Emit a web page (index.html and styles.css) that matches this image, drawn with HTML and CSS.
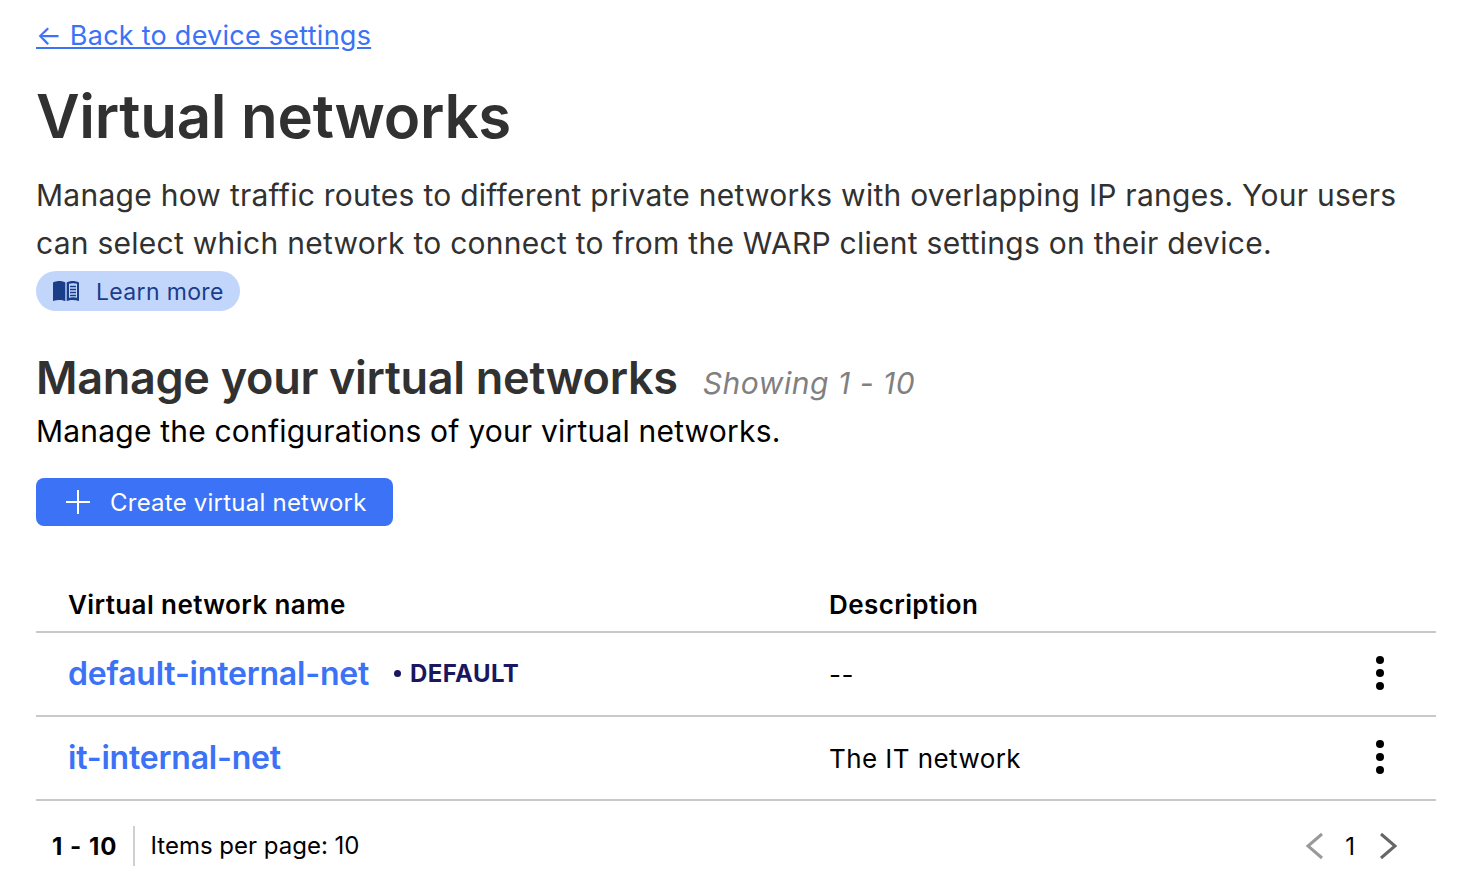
FILE: index.html

```html
<!DOCTYPE html>
<html lang="en">
<head>
  <meta charset="UTF-8" />
  <title>Virtual networks</title>
  <link rel="stylesheet" href="styles.css">
</head>
<body>
  <div class="page">
    <a class="back-link" href="#">← Back to device settings</a>
    <h1>Virtual networks</h1>
    <p class="intro">Manage how traffic routes to different private networks with overlapping IP ranges. Your users can select which network to connect to from the WARP client settings on their device.</p>
    <a class="learn-more" href="#">
      <svg class="book-icon" width="28" height="22" viewBox="0 0 28 22" aria-hidden="true">
        <path d="M1 2.500 C5 .5 10 .5 13.300 2.500 V21 C10 19.500 5 19.500 1 21 Z" fill="#1a3d8a"/>
        <path d="M14.700 2.500 C18 .5 23 .5 27 2.500 V21 C23 19.500 18 19.500 14.700 21 Z M17 3.800 V17.800 C19.500 17 22.500 17 25 17.800 V3.800 C22.500 3 19.500 3 17 3.800 Z" fill="#1a3d8a"/>
        <path d="M18 6.500 H24 M18 9.500 H24 M18 12.500 H24 M18 15.500 H24" stroke="#1a3d8a" stroke-width="1.500"/>
      </svg>
      <span class="learn-text">Learn more</span>
    </a>

    <div class="section-head">
      <h2>Manage your virtual networks</h2>
      <span class="showing">Showing 1 - 10</span>
    </div>
    <p class="section-sub">Manage the configurations of your virtual networks.</p>

    <button class="create-btn">
      <svg width="26" height="26" viewBox="0 0 26 26" aria-hidden="true"><path d="M13 1 V25 M1 13 H25" stroke="#fff" stroke-width="2"/></svg>
      Create virtual network
    </button>

    <table class="net-table">
      <thead>
        <tr>
          <th class="col-name">Virtual network name</th>
          <th class="col-desc">Description</th>
          <th class="col-menu"></th>
        </tr>
      </thead>
      <tbody>
        <tr>
          <td class="col-name"><a href="#">default-internal-net</a><span class="tag">DEFAULT</span></td>
          <td class="col-desc">--</td>
          <td class="col-menu"><span class="kebab"><i></i><i></i><i></i></span></td>
        </tr>
        <tr>
          <td class="col-name"><a href="#">it-internal-net</a></td>
          <td class="col-desc">The IT network</td>
          <td class="col-menu"><span class="kebab"><i></i><i></i><i></i></span></td>
        </tr>
      </tbody>
    </table>

    <div class="pager">
      <div class="pager-left">
        <strong class="range">1 - 10</strong>
        <span class="per-page">Items per page: 10</span>
      </div>
      <div class="pager-right">
        <svg width="20" height="28" viewBox="0 0 20 28" aria-hidden="true"><path d="M17 2 L3 14 L17 26" fill="none" stroke="#999" stroke-width="3"/></svg>
        <span class="page-num">1</span>
        <svg width="20" height="28" viewBox="0 0 20 28" aria-hidden="true"><path d="M3 2 L17 14 L3 26" fill="none" stroke="#666" stroke-width="3"/></svg>
      </div>
    </div>
  </div>
</body>
</html>
```

FILE: styles.css

```css
body {
  margin: 0;
  background-color: #ffffff;
  font-family: Inter, "Liberation Sans", sans-serif;
  color: #000000;
}

.page {
  padding: 17px 24px 0 36px;
}

.back-link {
  display: block;
  width: fit-content;
  font-size: 27px;
  letter-spacing: 0.25px;
  line-height: 38px;
  color: #3b72f6;
}

h1 {
  margin: 21px 0 0;
  font-size: 60px;
  letter-spacing: -0.3px;
  line-height: 80px;
  font-weight: 600;
  color: #313131;
}

.intro {
  margin: 15px 0 0;
  font-size: 30px;
  letter-spacing: 0.26px;
  line-height: 48px;
  color: #313131;
}

.learn-more {
  display: inline-flex;
  align-items: center;
  gap: 16px;
  height: 40px;
  margin-top: 4px;
  padding: 0 16px;
  border-radius: 20px;
  background-color: #c2d6fc;
  color: #1a3d8a;
  font-size: 23px;
  letter-spacing: 0.35px;
  text-decoration: none;
}

.learn-text {
  padding-top: 2px;
}

.section-head {
  display: flex;
  align-items: baseline;
  gap: 25px;
  margin-top: 37px;
}

h2 {
  margin: 0;
  font-size: 45px;
  letter-spacing: -0.3px;
  line-height: 60px;
  font-weight: 600;
  color: #313131;
}

.showing {
  font-size: 30px;
  letter-spacing: 0.55px;
  font-style: italic;
  color: #808080;
}

.section-sub {
  margin: 1px 0 0;
  font-size: 30px;
  letter-spacing: 0.2px;
  line-height: 44px;
}

.create-btn {
  display: flex;
  align-items: center;
  gap: 19px;
  height: 48px;
  margin-top: 25px;
  padding: 0 26px 0 29px;
  border: none;
  border-radius: 8px;
  background-color: #3b72f6;
  color: #ffffff;
  font-family: inherit;
  font-size: 24px;
  letter-spacing: 0.23px;
}

.net-table {
  width: 100%;
  margin-top: 53px;
  border-collapse: collapse;
}

.net-table th {
  height: 50px;
  padding: 0 0 2px;
  border-bottom: 2px solid #c9c9c9;
  text-align: left;
  font-size: 26px;
  letter-spacing: 0.4px;
  font-weight: 600;
}

.net-table td {
  height: 82px;
  padding: 0;
  border-bottom: 2px solid #c9c9c9;
  font-size: 26px;
  letter-spacing: 0.43px;
}

.net-table .col-name {
  width: 761px;
  padding-left: 32px;
}

.net-table td.col-name {
  padding-bottom: 2px;
  box-sizing: border-box;
}

.col-menu {
  width: 112px;
}

.col-name a {
  color: #3b72f6;
  font-size: 32px;
  letter-spacing: -0.2px;
  font-weight: 600;
  text-decoration: none;
}

.tag {
  display: inline-flex;
  align-items: center;
  gap: 9px;
  margin-left: 25px;
  color: #1a1660;
  font-size: 24px;
  letter-spacing: 0.4px;
  font-weight: 700;
  vertical-align: 8px;
}

.tag::before {
  content: "";
  width: 7px;
  height: 7px;
  border-radius: 50%;
  background-color: #1a1660;
}

.kebab {
  display: flex;
  flex-direction: column;
  gap: 5px;
  width: 8px;
  margin-left: 52px;
  margin-bottom: 2px;
}

.kebab i {
  display: block;
  width: 8px;
  height: 8px;
  border-radius: 50%;
  background-color: #000000;
}

.pager {
  display: flex;
  justify-content: space-between;
  align-items: center;
  margin-top: 24px;
  height: 42px;
  padding-left: 16px;
  padding-right: 38px;
}

.pager-left {
  display: flex;
  align-items: center;
  font-size: 24px;
}

.range {
  display: flex;
  align-items: center;
  height: 40px;
  padding-right: 16px;
  border-right: 2px solid #d0d0d0;
  letter-spacing: 1px;
  font-weight: 700;
}

.per-page {
  margin-left: 15px;
  padding-bottom: 2px;
}

.pager-right {
  display: flex;
  align-items: center;
  gap: 21px;
  font-size: 24px;
}

.page-num {
  margin: 0 2px 0 -1px;
}
```
